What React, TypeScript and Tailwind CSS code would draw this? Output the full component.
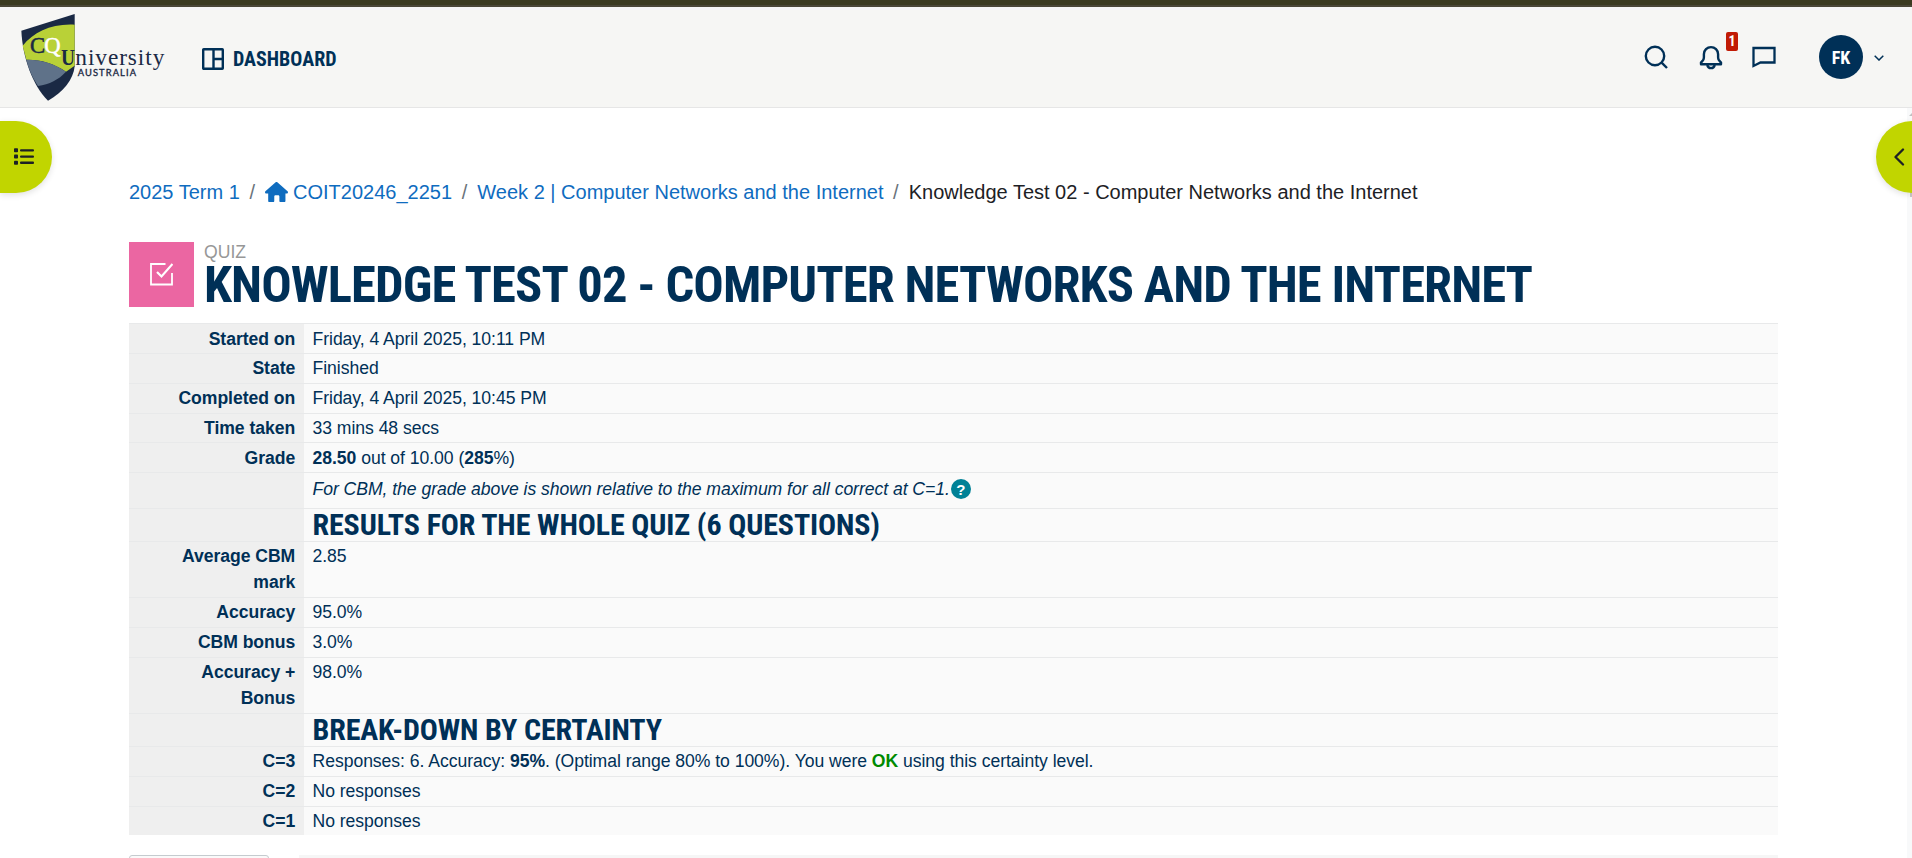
import type { ReactNode } from "react";

function Logo() {
  return (
    <svg viewBox="0 0 480 300" className="mt-0.5 ml-2.5 h-[100px] w-[160px] shrink-0" aria-label="CQUniversity Australia">
      <path d="M34 68 194 18V175C190 215 160 252 114 278 68 232 38 150 34 68Z" fill="#1a2944" />
      <path d="M38 113C72 72 125 46 194 50V173L168 191C130 165 90 154 49 155Z" fill="#b9d137" />
      <path d="M49 155C92 154 132 166 168 191 146 215 118 229 84 234 68 210 57 186 49 155Z" fill="#5f7289" />
      <g fontFamily="'Liberation Serif', serif" fill="#1a2944">
        <text x="60" y="134" fontSize="68" fontWeight="400" stroke="#1a2944" strokeWidth="1.5">C</text>
        <text x="103" y="134" fontSize="68" fill="#fff" stroke="#fff" strokeWidth="1.5">Q</text>
        <text x="153" y="170" fontSize="68" fontWeight="700" textLength="42" lengthAdjust="spacingAndGlyphs">U</text>
        <text x="196" y="170" fontSize="70" textLength="267">niversity</text>
      </g>
      <text x="203" y="203" fontSize="28" fontWeight="400" fontFamily="Lato, sans-serif" fill="#1a2944" stroke="#1a2944" strokeWidth="1" textLength="175">AUSTRALIA</text>
    </svg>
  );
}

function Header() {
  return (
    <header className="flex h-[108px] shrink-0 flex-col border-b border-[#e6e6e6] bg-[#f6f6f4]">
      <div className="h-[7px] shrink-0 border-b-2 border-[#4a4736] bg-[#3b3b20]" />
      <div className="flex h-[100px] items-center">
        <Logo />
        <a className="mt-[3px] ml-8 flex items-center">
          <svg viewBox="0 0 22 22" className="h-[22px] w-[22px]" fill="none" stroke="#003057" strokeWidth="2.400">
            <rect x="1.200" y="1.200" width="19.600" height="19.600" rx=".5" />
            <path d="M11.500 1v20M11.500 11H21" />
          </svg>
          <span className="ml-[9px] font-['Roboto_Condensed',Roboto,sans-serif] text-[20px] font-bold text-[#003057] [font-stretch:75%]">
            DASHBOARD
          </span>
        </a>
        <div className="ml-auto flex items-center text-[#003057]">
          <svg viewBox="0 0 24 24" className="h-6 w-6" fill="none" stroke="currentColor" strokeWidth="2.400">
            <circle cx="11" cy="11" r="9.200" />
            <path d="m17.600 17.600 5.400 5.400" />
          </svg>
          <div className="relative ml-[31px]">
            <svg viewBox="0 0 24 25" className="h-[25px] w-6" fill="none" stroke="currentColor" strokeWidth="2.400" strokeLinejoin="round">
              <path d="M2 19.300v-1.700l2-2.300c.7-1 .9-1.900.9-3V9.200a7.100 7.100 0 0 1 14.200 0v3.100c0 1.100.2 2 .9 3l2 2.300v1.700Z" />
              <path d="M8.300 20a3.750 3.750 0 0 0 7.400 0" />
            </svg>
            <span className="absolute -top-[13px] left-[27px] flex h-[19px] w-3 items-center justify-center rounded-[2px] bg-[#c11b05] font-['Roboto_Condensed',Roboto,sans-serif] text-[14px] font-bold text-white [font-stretch:75%]">
              1
            </span>
          </div>
          <svg viewBox="0 0 24 22" className="ml-[29px] h-[22px] w-6" fill="none" stroke="currentColor" strokeWidth="2.300">
            <path d="M1.500 2h21v14.500H8.500l-7 3.500Z" />
          </svg>
          <span className="ml-[43px] flex h-11 w-11 items-center justify-center rounded-full bg-[#003057] font-['Roboto_Condensed',Roboto,sans-serif] text-[18px] font-bold text-white [font-stretch:75%]">
            FK
          </span>
          <svg viewBox="0 0 10 6" className="mt-[2px] mr-[28px] ml-[11px] h-1.5 w-2.5" fill="none" stroke="currentColor" strokeWidth="1.500">
            <path d="m.7.7 4.300 4.300L9.300.7" />
          </svg>
        </div>
      </div>
    </header>
  );
}

function Slash() {
  return <span className="mx-[9.600px] text-[#6a737b]">/</span>;
}

function Breadcrumb() {
  return (
    <nav className="flex h-[30px] items-center whitespace-nowrap text-[20px] text-[#0f6cbf]">
      <a>2025 Term 1</a>
      <Slash />
      <svg viewBox="0 0 576 512" className="mr-[5.500px] h-[20.500px] w-[23px]" fill="currentColor">
        <path d="M575.800 255.500c0 18-15 32.100-32 32.100h-32l.7 160.200c0 2.700-.2 5.400-.5 8.100V472c0 22.100-17.900 40-40 40h-72c-22.100 0-40-17.900-40-40V360c0-17.700-14.300-32-32-32h-64c-17.700 0-32 14.300-32 32v112c0 22.100-17.900 40-40 40h-72c-22.100 0-40-17.900-40-40V287.600H32c-18 0-32-14-32-32.100 0-9 3-17 10-24L266.400 8c7-7 15-8 22-8s15 2 21 7l255.400 224.500c8 7 12 15 11 24Z" />
      </svg>
      <a>COIT20246_2251</a>
      <Slash />
      <a className="ml-[0.500px]">Week 2 | Computer Networks and the Internet</a>
      <Slash />
      <span className="ml-[0.500px] text-[#1d2125]">Knowledge Test 02 - Computer Networks and the Internet</span>
    </nav>
  );
}

function Title() {
  return (
    <div className="mt-[35px] flex h-[65px]">
      <div className="flex w-[65px] items-center justify-center bg-[#eb66a2]">
        <svg viewBox="0 0 24 24" className="-mt-0.5 -ml-0.5 h-6 w-6" fill="none" stroke="#fff" strokeWidth="1.800">
          <path d="M16.500 2H2v20.500h21V11" />
          <path d="m8 10 4.500 4.500L23.500 2" strokeWidth="2.200" />
        </svg>
      </div>
      <div className="ml-[10px]">
        <div className="h-[18px] text-[17.600px] leading-[20px] text-[#979797]">QUIZ</div>
        <h1 className="font-['Roboto_Condensed',Roboto,sans-serif] text-[50.600px] leading-[50px] font-bold tracking-[-0.910px] whitespace-nowrap text-[#003057] [font-stretch:75%]">
          KNOWLEDGE TEST 02 - COMPUTER NETWORKS AND THE INTERNET
        </h1>
      </div>
    </div>
  );
}

function Section({ children }: { children: ReactNode }) {
  return (
    <h3 className="-mt-px font-['Roboto_Condensed',Roboto,sans-serif] text-[30px] leading-[32px] font-bold tracking-[-0.120px] [font-stretch:75%]">
      {children}
    </h3>
  );
}

const rows: { h: string; pad?: string; label?: string; value: ReactNode }[] = [
  { h: "h-[30px]", pad: "pt-0.5", label: "Started on", value: "Friday, 4 April 2025, 10:11 PM" },
  { h: "h-[30px]", label: "State", value: "Finished" },
  { h: "h-[30px]", label: "Completed on", value: "Friday, 4 April 2025, 10:45 PM" },
  { h: "h-[29px]", label: "Time taken", value: "33 mins 48 secs" },
  { h: "h-[30px]", pad: "pt-0.5", label: "Grade", value: <><b>28.50</b> out of 10.00 (<b>285</b>%)</> },
  {
    h: "h-[36px]",
    value: (
      <div className="flex items-center pt-[2px]">
        <i>For CBM, the grade above is shown relative to the maximum for all correct at C=1.</i>
        <span className="ml-px flex h-5 w-5 items-center justify-center rounded-full bg-[#008196] text-[15px] leading-none font-bold text-white">
          ?
        </span>
      </div>
    ),
  },
  { h: "h-[33px]", value: <Section>RESULTS FOR THE WHOLE QUIZ (6 QUESTIONS)</Section> },
  { h: "h-[56px]", label: "Average CBM mark", value: "2.85" },
  { h: "h-[30px]", label: "Accuracy", value: "95.0%" },
  { h: "h-[30px]", label: "CBM bonus", value: "3.0%" },
  { h: "h-[56px]", label: "Accuracy + Bonus", value: "98.0%" },
  { h: "h-[33px]", value: <Section>BREAK-DOWN BY CERTAINTY</Section> },
  {
    h: "h-[30px]",
    label: "C=3",
    value: (
      <>
        Responses: 6. Accuracy: <b>95%</b>. (Optimal range 80% to 100%). You were{" "}
        <b className="text-[#008a00]">OK</b> using this certainty level.
      </>
    ),
  },
  { h: "h-[30px]", label: "C=2", value: "No responses" },
  { h: "h-[29px]", label: "C=1", value: "No responses" },
];

export default function App() {
  return (
    <div className="relative flex h-[858px] w-full flex-col overflow-hidden bg-white font-['Liberation_Sans',Arial,sans-serif]">
      <Header />
      <div className="flex flex-1 justify-between overflow-hidden">
        <main className="ml-[129px] w-[1649px] pt-[69px]">
          <Breadcrumb />
          <Title />
          <div className="mt-4 text-[17.600px] leading-[26.400px] tracking-[-0.045px] text-[#003057]">
            {rows.map((r, i) => (
              <div key={i} className={`${r.h} flex border-t border-[#e8e9ea]`}>
                <div className={`${r.pad ?? "pt-px"} w-[175px] shrink-0 bg-[#efefef] pr-[8.800px] pl-8 text-right font-bold`}>
                  {r.label}
                </div>
                <div className={`${r.pad ?? "pt-px"} flex-1 bg-[#fafafa] pl-[8.500px]`}>{r.value}</div>
              </div>
            ))}
          </div>
          <div className="mt-5 flex justify-between">
            <div className="h-10 w-[140px] rounded-[3px] border border-[#c5cbcf] bg-[#fafafa]" />
            <div className="h-10 w-[1479px] bg-[#f6f6f6]" />
          </div>
        </main>
        <div className="w-[5px] bg-[#f8f9fa] pt-1">
          <svg viewBox="0 0 5 5" className="ml-0.5 h-[5px] w-[3px]">
            <path d="M0 5 5 0V5Z" fill="#c1c1c1" />
          </svg>
          <div className="mt-5 ml-[3px] h-[60px] bg-[#c8c8c8]" />
        </div>
      </div>
      <button className="absolute top-[121px] left-0 flex h-[72px] w-[52px] items-center rounded-r-full bg-[#c1d500] pl-3.5 shadow-[0_2px_6px_rgba(0,0,0,0.12)]">
        <svg viewBox="0 0 20 17" className="-mt-px h-[17px] w-5" fill="#1d2125">
          <rect y=".3" width="4" height="4" rx=".8" />
          <rect y="6.500" width="4" height="4" rx=".8" />
          <rect y="12.700" width="4" height="4" rx=".8" />
          <rect x="6" y="1.200" width="14" height="2.300" rx="1" />
          <rect x="6" y="7.400" width="14" height="2.300" rx="1" />
          <rect x="6" y="13.600" width="14" height="2.300" rx="1" />
        </svg>
      </button>
      <button className="absolute top-[121px] right-0 flex h-[72px] w-9 items-center rounded-l-full bg-[#c1d500] pl-[17px] shadow-[0_2px_6px_rgba(0,0,0,0.12)]">
        <svg viewBox="0 0 12 18" className="-mt-px h-[18px] w-3" fill="none" stroke="#1d2125" strokeWidth="2.300" strokeLinecap="round" strokeLinejoin="round">
          <path d="m10 1.500-7.500 7.500 7.500 7.500" />
        </svg>
      </button>
    </div>
  );
}
